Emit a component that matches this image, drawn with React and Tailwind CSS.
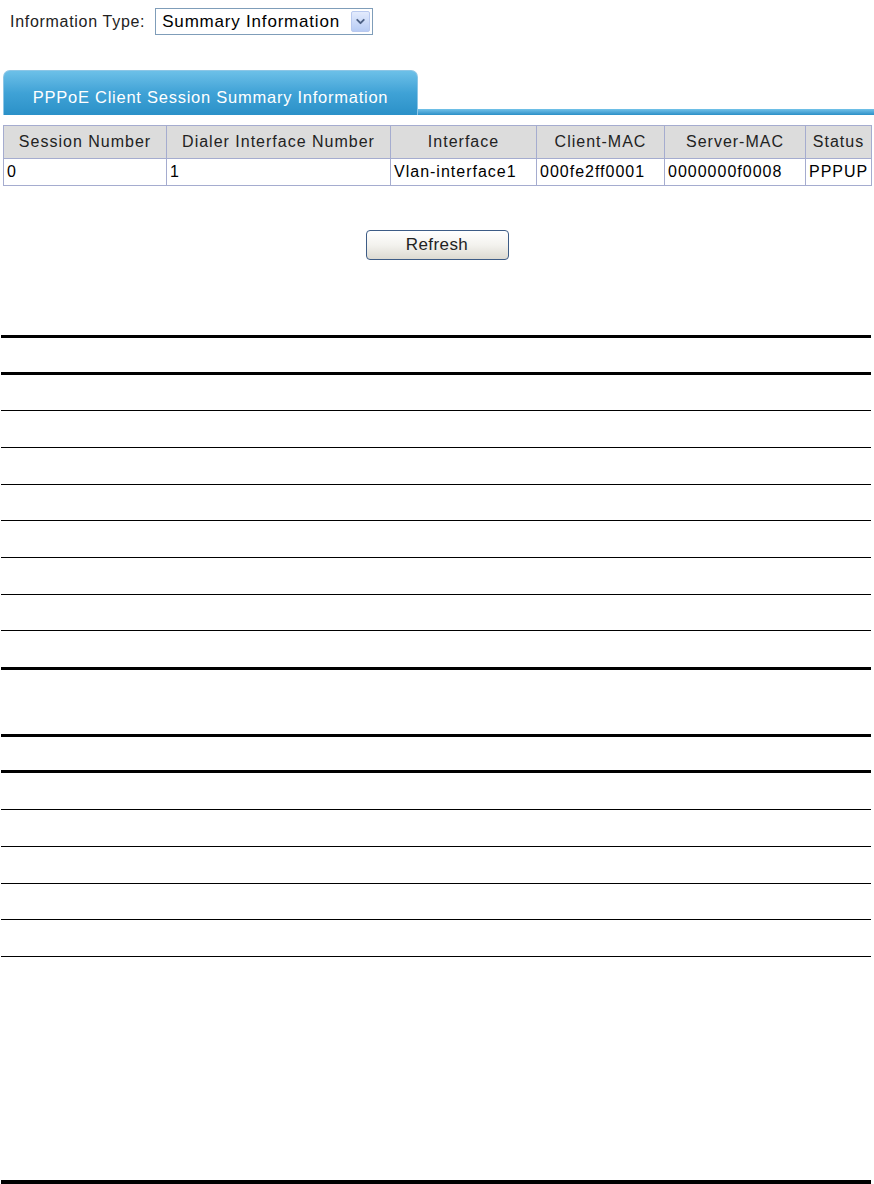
import { ChevronDown } from 'lucide-react';

const font = { fontFamily: '"Liberation Sans", Arial, sans-serif' };

const columns = [
  { label: 'Session Number', w: 'w-[163px]' },
  { label: 'Dialer Interface Number', w: 'w-[224px]' },
  { label: 'Interface', w: 'w-[146px]' },
  { label: 'Client-MAC', w: 'w-[128px]' },
  { label: 'Server-MAC', w: 'w-[141px]' },
  { label: 'Status', w: 'flex-1' },
];

const row = ['0', '1', 'Vlan-interface1', '000fe2ff0001', '0000000f0008', 'PPPUP'];

function RuleBlock({ headH, rows, lastThick }) {
  return (
    <div className="ml-[1px] w-[870px]">
      <div className="border-t-[3px] border-b-[3px] border-black" style={{ height: headH + 6 }} />
      {rows.map((h, i) => {
        const last = i === rows.length - 1;
        return (
          <div
            key={i}
            className={last && lastThick ? 'border-b-[3px] border-black' : 'border-b border-black'}
            style={{ height: h + (last && lastThick ? 3 : 1) }}
          />
        );
      })}
    </div>
  );
}

export default function App() {
  return (
    <div className="w-[874px] h-[1184px] bg-white text-black overflow-hidden relative" style={font}>
      {/* top selector */}
      <div className="flex items-center pt-[8px] pl-[10px] h-[35px]">
        <span className="text-[16px] tracking-[0.7px] text-[#222] mr-[10px] leading-none">Information Type:</span>
        <div className="flex items-center w-[218px] h-[27px] border border-[#7f9db9] bg-white pl-[6px] pr-[2px]">
          <span className="flex-1 text-[17px] tracking-[0.8px] leading-none text-black">Summary Information</span>
          <div className="w-[19px] h-[21px] rounded-[2px] border border-[#b9c9ef] bg-gradient-to-b from-[#e3ebfd] to-[#b8ccf4] flex items-center justify-center">
            <ChevronDown className="w-[13px] h-[13px] text-[#4d6185]" strokeWidth={3.5} />
          </div>
        </div>
      </div>

      {/* tab */}
      <div className="mt-[35px] flex items-end h-[45px]">
        <div className="ml-[3px] w-[415px] h-[45px] pt-[8px] rounded-t-[7px] border border-[#8cc6e6] border-b-0 bg-gradient-to-b from-[#6cc0e8] via-[#3fa2d6] to-[#2b91c8] flex items-center justify-center">
          <span className="text-[16.5px] tracking-[0.75px] text-white leading-none">PPPoE Client Session Summary Information</span>
        </div>
        <div className="flex-1 h-[6px] bg-gradient-to-b from-[#72c2e9] to-[#2a90c7]" />
      </div>

      {/* session table */}
      <div className="mt-[10px] ml-[3px] w-[869px] border border-[#a5accf]">
        <div className="flex h-[33px] bg-[#dcdcdc] border-b border-[#a5accf]">
          {columns.map((c, i) => (
            <div
              key={c.label}
              className={`${c.w} flex items-center justify-center text-[16px] tracking-[1px] text-[#222] ${i < columns.length - 1 ? 'border-r border-[#a5accf]' : ''}`}
            >
              {c.label}
            </div>
          ))}
        </div>
        <div className="flex h-[26px]">
          {row.map((v, i) => (
            <div
              key={i}
              className={`${columns[i].w} flex items-center pl-[3px] text-[16px] tracking-[1px] text-black ${i < row.length - 1 ? 'border-r border-[#a5accf]' : ''}`}
            >
              {v}
            </div>
          ))}
        </div>
      </div>

      {/* refresh */}
      <div className="mt-[44px] flex justify-center">
        <button className="w-[143px] h-[30px] rounded-[4px] border border-[#3d5c86] bg-gradient-to-b from-white via-[#f3f2ee] to-[#dcdad2] text-[17px] tracking-[0.4px] text-[#222]">
          Refresh
        </button>
      </div>

      {/* empty ruled tables */}
      <div className="mt-[75px]">
        <RuleBlock headH={34} rows={[35, 36, 36, 35, 36, 36, 35, 36]} lastThick />
      </div>
      <div className="mt-[64px]">
        <RuleBlock headH={33} rows={[36, 36, 36, 35, 36]} />
      </div>
      <div className="absolute left-[1px] bottom-0 w-[870px] h-[4px] bg-black" />
    </div>
  );
}
